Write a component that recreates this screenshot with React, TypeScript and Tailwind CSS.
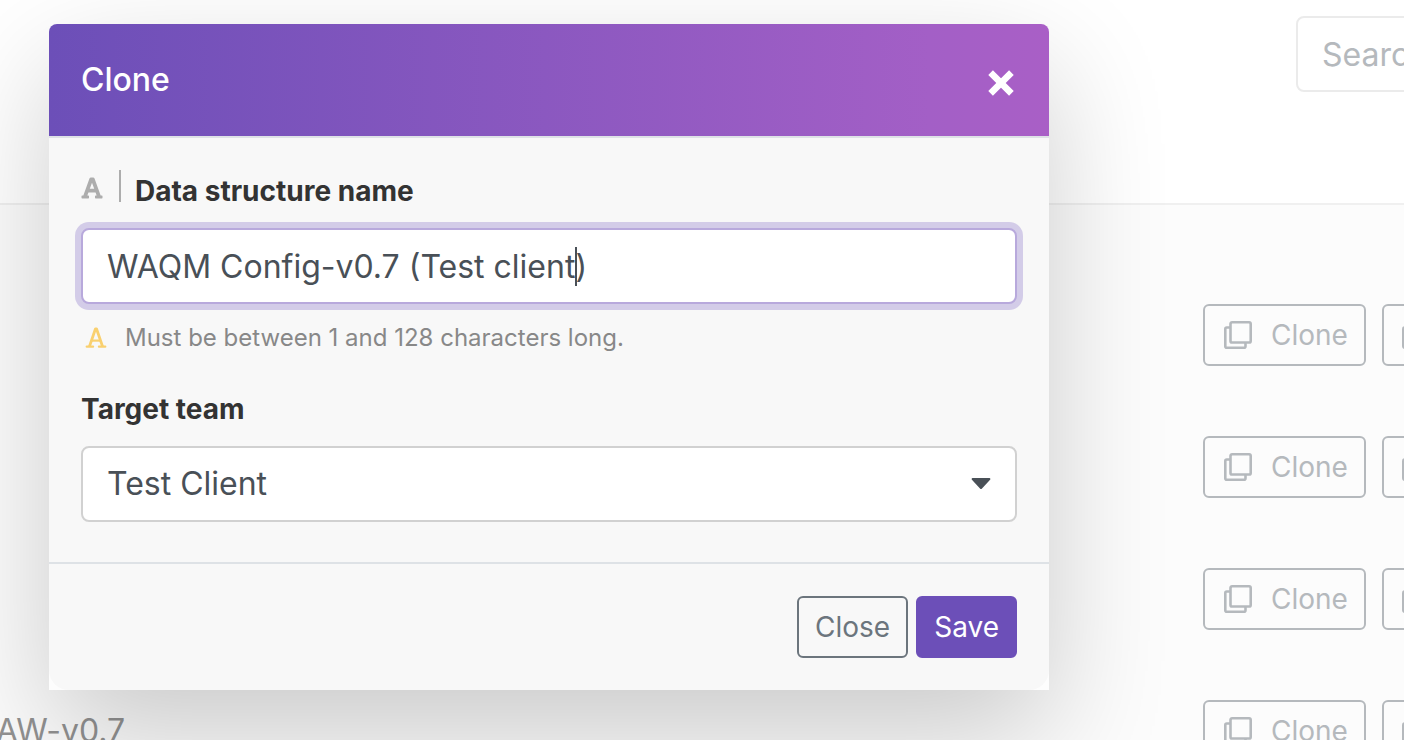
import { useState } from "react";
import { FaFont } from "react-icons/fa";

function CopyIcon() {
  return (
    <svg aria-hidden="true" viewBox="0 0 28 28" className="h-7 w-7 shrink-0" fill="none" stroke="currentColor" strokeWidth="2.6">
      <rect x="6.5" y="1.3" width="20.2" height="20.2" rx="1.6" />
      <path d="M6.5 6.5H2.8A1.5 1.5 0 0 0 1.3 8v17.2a1.5 1.5 0 0 0 1.5 1.5H20a1.5 1.5 0 0 0 1.5-1.5v-3.7" />
    </svg>
  );
}

function ThinLetterIcon() {
  return (
    <svg aria-hidden="true" viewBox="0 0 22 22" className="h-[22px] w-[22px] text-[#f9d06f]" fill="none" stroke="currentColor">
      <path d="M4.4 19.6 L10.5 1.8 H11.5 L17.6 19.6" strokeWidth="2.8" strokeLinejoin="round" />
      <path d="M6.6 13.6 H15.6" strokeWidth="2.2" />
      <path d="M1.8 19.6 H8 M14 19.6 H20.2" strokeLinecap="round" strokeWidth="2.4" />
    </svg>
  );
}

const outline = "inline-flex h-[62px] shrink-0 items-center rounded-md border-2 border-[#b5b9bd] text-[28px] text-[#b5b9bd]";
const rows = ["", "", "", "AW-v0.7"];

function DataPage() {
  return (
    <div aria-hidden="true" className="h-full overflow-hidden">
      <header className="flex h-[205px] justify-end border-b-2 border-[#f0f0f0] bg-white pt-4">
        <div className="w-[108px] overflow-hidden">
          <input
            type="search"
            aria-label="Search"
            placeholder="Search"
            className="h-[76px] w-80 rounded-lg border-2 border-[#ebebeb] bg-white px-6 text-[32px] placeholder:text-[#b5b9bd]"
          />
        </div>
      </header>
      <table className="mt-16 w-full table-fixed">
        <tbody>
          {rows.map((name, i) => (
            <tr key={i} className="h-[132px]">
              <td className="text-[32px] whitespace-nowrap text-[#929292]">
                <span className="-ml-1">{name}</span>
              </td>
              <td className="w-[201px]">
                <div className="flex gap-4 overflow-hidden">
                  <button type="button" className={`${outline} w-[163px] gap-[19px] pl-[19px]`}>
                    <CopyIcon />
                    Clone
                  </button>
                  <button type="button" aria-label="Copy" className={`${outline} w-[163px] pl-[18px]`}>
                    <CopyIcon />
                  </button>
                </div>
              </td>
            </tr>
          ))}
        </tbody>
      </table>
    </div>
  );
}

function CloneDialog() {
  const [name, setName] = useState("WAQM Config-v0.7 (Test client)");
  return (
    <form
      role="dialog"
      aria-labelledby="dialog-title"
      onSubmit={(e) => e.preventDefault()}
      className="w-full max-w-[1000px] rounded-t-lg bg-[#fdfdfd] shadow-[0_45px_120px_rgba(0,0,0,0.2)]"
    >
      <header className="flex h-[114px] items-center justify-between rounded-t-lg border-b-2 border-[#dee2e6] bg-linear-[90deg,#6c4fb8,#a35fc6_88%,#a95fc6] bg-origin-border px-8">
        <h2 id="dialog-title" className="text-[32px] font-medium text-white">Clone</h2>
        <button type="button" aria-label="Close dialog" className="pt-1.5 text-white">
          <svg aria-hidden="true" viewBox="0 0 32 32" className="h-8 w-8" stroke="currentColor" strokeWidth="6.6">
            <path d="M5.6 5.6 L26.4 26.4 M26.4 5.6 L5.6 26.4" />
          </svg>
        </button>
      </header>

      <div className="bg-[#f8f8f8] px-8 pt-8 pb-10">
        <div className="flex h-[34px] items-start">
          <FaFont aria-hidden="true" className="mt-1.5 h-6 w-[22px] text-[#adadad]" />
          <span className="mr-3.5 ml-4 h-8 w-0.5 bg-[#adadad]" />
          <label htmlFor="structure-name" className="pt-1 text-[28px] leading-[34px] font-bold text-[#333]">
            Data structure name
          </label>
        </div>
        <div className="relative mt-6">
          <input
            id="structure-name"
            value={name}
            onChange={(e) => setName(e.target.value)}
            aria-describedby="name-hint"
            className="block h-[76px] w-full rounded-lg border-2 border-[#b8a9dc] bg-white px-6 text-[32px] text-[#495057] shadow-[0_0_0_6px_#d3cce8] outline-none"
          />
          <span className="absolute top-[19px] left-[494px] h-[39px] w-0.5 bg-[#495057]" />
        </div>
        <p id="name-hint" className="mt-4 flex h-9 items-center gap-[18px] pl-1 text-[24px] text-[#888]">
          <ThinLetterIcon />
          Must be between 1 and 128 characters long.
        </p>
        <label htmlFor="target-team" className="mt-9 block text-[28px] leading-[34px] font-bold text-[#333]">
          Target team
        </label>
        <div className="relative mt-5">
          <select
            id="target-team"
            className="block h-[76px] w-full appearance-none rounded-lg border-2 border-[#d1d1d1] bg-white px-6 text-[32px] text-[#495057]"
          >
            <option>Test Client</option>
          </select>
          <svg aria-hidden="true" viewBox="0 0 20 12" className="pointer-events-none absolute top-8 right-[26px] h-3 w-5" fill="#495057">
            <path d="M1.5 0H18.5a1 1 0 0 1 .6 1.7L11 10.4a1.4 1.4 0 0 1-2 0L.9 1.7A1 1 0 0 1 1.5 0Z" />
          </svg>
        </div>
      </div>

      <footer className="flex justify-end gap-2 rounded-b-[20px] border-t-2 border-[#dee2e6] bg-[#f8f8f8] p-8 text-[28px]">
        <button type="button" className="h-[62px] rounded-md border-2 border-[#6c757d] px-4 text-[#6c757d]">Close</button>
        <button type="submit" className="h-[62px] rounded-md border-2 border-[#6c4fb8] bg-[#6c4fb8] px-4 text-white">Save</button>
      </footer>
    </form>
  );
}

export default function App() {
  return (
    <main className="relative h-screen overflow-hidden bg-[#fcfcfc] font-['Inter',sans-serif]">
      <DataPage />
      <div className="absolute inset-0 pt-6 pl-[49px]">
        <CloneDialog />
      </div>
    </main>
  );
}
